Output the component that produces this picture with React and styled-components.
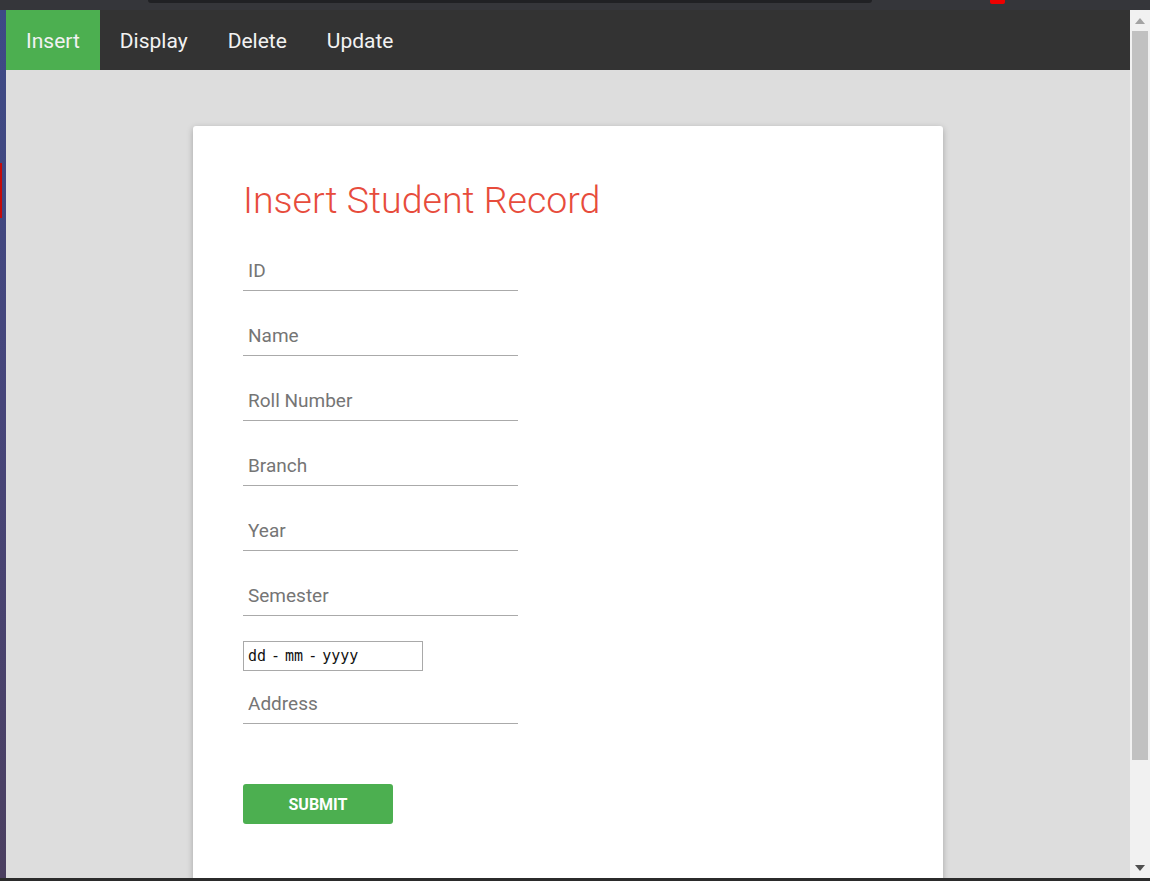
import React from 'react';
import styled, { createGlobalStyle } from 'styled-components';

const GlobalStyle = createGlobalStyle`
  html, body {
    margin: 0;
    padding: 0;
    overflow: hidden;
  }
  body {
    font-family: Roboto, "Noto Sans", Arial, sans-serif;
  }
  * {
    box-sizing: border-box;
  }
`;

const fields = ['ID', 'Name', 'Roll Number', 'Branch', 'Year', 'Semester'];
const tabs = ['Insert', 'Display', 'Delete', 'Update'];
const dateParts = ['dd', 'mm', 'yyyy'];

const App = () => (
  <Screen>
    <GlobalStyle />
    <TopChrome>
      <AddressBar />
      <ExtBadge />
    </TopChrome>
    <Middle>
      <Desktop>
        <DesktopIcon />
      </Desktop>
      <Window>
        <Nav>
          {tabs.map((t) => (
            <NavLink key={t} active={t === 'Insert'}>{t}</NavLink>
          ))}
        </Nav>
        <Content>
          <Card>
            <Title>Insert Student Record</Title>
            <Form onSubmit={(e) => e.preventDefault()}>
              {fields.map((f) => (
                <TextInput key={f} type="text" placeholder={f} />
              ))}
              <DateBox>
                {dateParts.map((p, i) => (
                  <React.Fragment key={p}>
                    {i > 0 && <DateSep>-</DateSep>}
                    <span>{p}</span>
                  </React.Fragment>
                ))}
              </DateBox>
              <TextInput type="text" placeholder="Address" />
              <SubmitButton type="submit">SUBMIT</SubmitButton>
            </Form>
          </Card>
        </Content>
      </Window>
      <Scrollbar>
        <ArrowButton>
          <svg width="10" height="6" viewBox="0 0 10 6">
            <polygon points="0,6 5,0 10,6" fill="#a3a3a3" />
          </svg>
        </ArrowButton>
        <Thumb />
        <Track />
        <ArrowButton>
          <svg width="10" height="6" viewBox="0 0 10 6">
            <polygon points="0,0 10,0 5,6" fill="#505050" />
          </svg>
        </ArrowButton>
      </Scrollbar>
    </Middle>
    <BottomEdge />
  </Screen>
);

const Screen = styled.div`
  width: 1150px;
  height: 881px;
  display: flex;
  flex-direction: column;
  overflow: hidden;
`;

const TopChrome = styled.div`
  height: 10px;
  flex-shrink: 0;
  background: #35363a;
  display: flex;
  align-items: flex-start;
`;

const AddressBar = styled.div`
  margin-left: 148px;
  width: 724px;
  height: 3px;
  background: #202124;
  border-radius: 0 0 8px 8px;
`;

const ExtBadge = styled.div`
  margin-left: 118px;
  width: 15px;
  height: 4px;
  background: #ee0000;
  border-radius: 0 0 2px 2px;
`;

const Middle = styled.div`
  flex: 1;
  min-height: 0;
  display: flex;
`;

const Desktop = styled.div`
  width: 6px;
  flex-shrink: 0;
  background: linear-gradient(180deg, #3d4a86 0%, #46457a 45%, #4b3f60 100%);
  padding-top: 153px;
`;

const DesktopIcon = styled.div`
  width: 2px;
  height: 55px;
  background: #c40a0a;
`;

const Window = styled.div`
  flex: 1;
  min-width: 0;
  display: flex;
  flex-direction: column;
  overflow: hidden;
`;

const Nav = styled.nav`
  height: 60px;
  flex-shrink: 0;
  background: #333333;
  display: flex;
`;

const NavLink = styled.a`
  display: flex;
  align-items: center;
  padding: 1px 20px 0;
  font-size: 21px;
  color: #f2f2f2;
  background: ${(p) => (p.active ? '#4caf50' : 'transparent')};
  cursor: pointer;
`;

const Content = styled.main`
  flex: 1;
  background: #dddddd;
  display: flex;
  justify-content: center;
  align-items: flex-start;
  padding-top: 56px;
  overflow: hidden;
`;

const Card = styled.div`
  width: 750px;
  min-height: 900px;
  flex-shrink: 0;
  background: #fff;
  border-radius: 3px;
  box-shadow: 0 2px 6px rgba(0, 0, 0, 0.25);
  padding: 53px 50px 50px;
`;

const Title = styled.h1`
  margin: 0 0 23px;
  font-size: 37.5px;
  line-height: 43px;
  font-weight: 300;
  color: #e74c3c;
`;

const Form = styled.form`
  display: flex;
  flex-direction: column;
  align-items: flex-start;
`;

const TextInput = styled.input`
  width: 275px;
  height: 46px;
  margin: 0 0 19px;
  padding: 5px 5px 0;
  border: none;
  border-bottom: 1px solid #aaaaaa;
  outline: none;
  font-family: Roboto, sans-serif;
  font-size: 19px;
  color: #333;
  background: transparent;

  &::placeholder {
    color: #757575;
  }
`;

const DateBox = styled.div`
  width: 180px;
  height: 30px;
  margin: 6px 0 7px;
  padding-left: 4px;
  display: flex;
  align-items: center;
  border: 1px solid #a9a9a9;
  font-family: "DejaVu Sans Mono", "Liberation Mono", monospace;
  font-size: 15px;
  color: #111;
`;

const DateSep = styled.span`
  margin: 0 5px;
`;

const SubmitButton = styled.button`
  margin-top: 41px;
  width: 150px;
  height: 40px;
  border: none;
  border-radius: 3px;
  background: #4caf50;
  color: #fff;
  font-family: Roboto, sans-serif;
  font-size: 16px;
  font-weight: 700;
  cursor: pointer;
`;

const Scrollbar = styled.div`
  width: 20px;
  flex-shrink: 0;
  background: #f1f1f1;
  display: flex;
  flex-direction: column;
  align-items: center;
`;

const ArrowButton = styled.div`
  height: 21px;
  width: 100%;
  display: flex;
  align-items: center;
  justify-content: center;
`;

const Thumb = styled.div`
  width: 16px;
  height: 729px;
  background: #c1c1c1;
`;

const Track = styled.div`
  flex: 1;
`;

const BottomEdge = styled.div`
  height: 3px;
  flex-shrink: 0;
  background: #2b2b2b;
`;

export default App;
